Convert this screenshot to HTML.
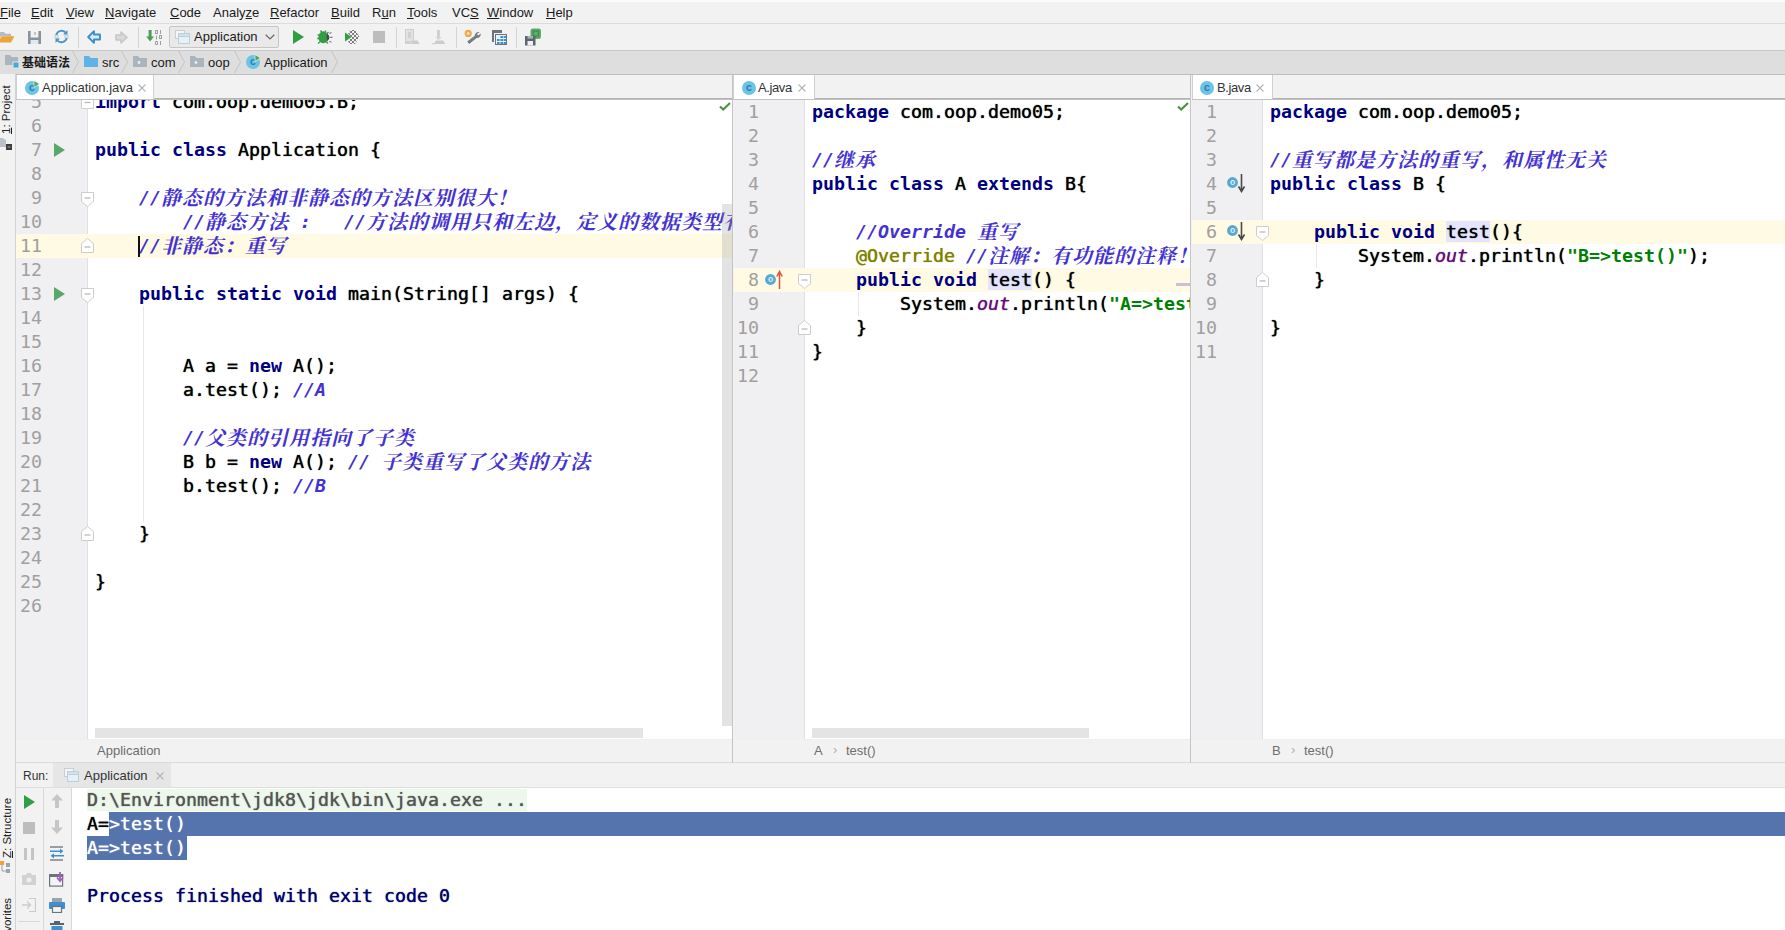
<!DOCTYPE html>
<html lang="zh"><head><meta charset="utf-8"><title>IntelliJ IDEA</title>
<style>
html,body{margin:0;padding:0}
html{width:1785px;height:930px;overflow:hidden}
body{width:1785px;height:930px;overflow:hidden;position:relative;background:#fff;font-family:"Liberation Sans","Noto Sans CJK SC",sans-serif;font-size:13px;color:#1a1a1a}
.a{position:absolute}
.m{font-family:"DejaVu Sans Mono","Liberation Mono","Noto Sans CJK SC",monospace;font-size:18.27px;line-height:24px;white-space:pre;letter-spacing:0;text-shadow:0 0 1px}
.code{color:#000}
.ln{color:#a0a0a0;text-align:right}
.k{color:#000080;font-weight:bold}
.s{color:#008000;font-weight:bold}
.c{color:#4432d0;font-style:italic;font-weight:bold}
.z{font-family:"Liberation Serif","Noto Serif CJK SC","Noto Sans CJK SC",serif;font-size:20px;letter-spacing:1px;font-weight:700;line-height:20px;position:relative;top:1px}
.an{color:#808000}
.f{color:#660e7a;font-style:italic}
.k,.s,.c,.ln{text-shadow:none}
.hl{background:#e4e4ff}
.ui{white-space:pre;line-height:16px}
u{text-decoration:underline;text-underline-offset:1px}
.vt{transform-origin:0 0;transform:rotate(-90deg);white-space:pre;font-size:11.5px;line-height:13px;color:#222}
</style></head><body>
<div class="a" style="left:0;top:0;width:1785px;height:24px;background:#f2f2f2"></div><div class="a" style="left:0;top:0;width:1785px;height:2px;background:#fbfbfb"></div><div class="a ui" style="left:0px;top:5px"><u>F</u>ile</div><div class="a ui" style="left:31px;top:5px"><u>E</u>dit</div><div class="a ui" style="left:66px;top:5px"><u>V</u>iew</div><div class="a ui" style="left:105px;top:5px"><u>N</u>avigate</div><div class="a ui" style="left:170px;top:5px"><u>C</u>ode</div><div class="a ui" style="left:213px;top:5px">Analy<u>z</u>e</div><div class="a ui" style="left:270px;top:5px"><u>R</u>efactor</div><div class="a ui" style="left:331px;top:5px"><u>B</u>uild</div><div class="a ui" style="left:372px;top:5px">R<u>u</u>n</div><div class="a ui" style="left:407px;top:5px"><u>T</u>ools</div><div class="a ui" style="left:452px;top:5px">VC<u>S</u></div><div class="a ui" style="left:487px;top:5px"><u>W</u>indow</div><div class="a ui" style="left:546px;top:5px"><u>H</u>elp</div><div class="a" style="left:0;top:23px;width:1785px;height:1px;background:#dcdcdc"></div><div class="a" style="left:0;top:24px;width:1785px;height:26px;background:#f2f2f2"></div><div class="a" style="left:0;top:50px;width:1785px;height:1px;background:#c9c9c9"></div><div class="a" style="left:0;top:51px;width:1785px;height:23px;background:#dedede"></div><div class="a" style="left:0;top:74px;width:1785px;height:1px;background:#bebebe"></div><div class="a" style="left:0;top:75px;width:1785px;height:23px;background:#f2f2f2"></div><div class="a" style="left:0;top:98px;width:1785px;height:1px;background:#b2b2b2"></div><div class="a" style="left:0;top:99px;width:1785px;height:1px;background:#c2c2c2"></div><div class="a" style="left:0;top:74px;width:16px;height:856px;background:#f2f2f2;border-right:1px solid #d2d2d2;box-sizing:border-box"></div><svg class="a" style="left:-2px;top:31px" width="17" height="12" viewBox="0 0 17 12" ><path d="M0 1h6l1.5 1.8H13V5H3L0 11z" fill="#b3bcc4"/><path d="M3.5 5.2H16.5L13 11.6H0z" fill="#eaa43a"/></svg><svg class="a" style="left:28px;top:31px" width="13" height="13" viewBox="0 0 13 13" ><path d="M0 0h13v13H0z" fill="#8a939b"/><path d="M2.6 0h7.8v6.5H2.6z" fill="#f2f2f2"/><path d="M2.6 9h7.8v4H2.6z" fill="#dfe9f2"/><path d="M6 1h2v3H6z" fill="#8a939b" opacity=".5"/></svg><svg class="a" style="left:54px;top:29px" width="15" height="15" viewBox="0 0 15 15" ><path d="M2.2 6.2A5.5 5.5 0 0 1 12 4" fill="none" stroke="#4a94c8" stroke-width="1.8"/><path d="M12.8 8.8A5.5 5.5 0 0 1 3 11" fill="none" stroke="#4a94c8" stroke-width="1.8"/><path d="M13.5 1v4.5H9z" fill="#4a94c8"/><path d="M1.5 14V9.5H6z" fill="#4a94c8"/><rect x="1" y="6" width="3" height="3" fill="#e8f0f8" stroke="#8aa" stroke-width=".5"/><rect x="11" y="6" width="3" height="3" fill="#e8f0f8" stroke="#8aa" stroke-width=".5"/></svg><div class="a" style="left:78px;top:27px;width:1px;height:21px;background:#d4d4d4"></div><svg class="a" style="left:87px;top:30px" width="14" height="14" viewBox="0 0 14 14" ><path d="M7 1.2L1.2 7 7 12.8V9.5h6v-5H7z" fill="#d6ecfa" stroke="#3a8fc9" stroke-width="1.9" stroke-linejoin="round"/></svg><svg class="a" style="left:115px;top:31px" width="13" height="13" viewBox="0 0 13 13" ><path d="M6 1L12 6.5 6 12V9H1V4h5z" fill="#d9d9d9" stroke="#c6c6c6" stroke-width="1.5" stroke-linejoin="round"/></svg><div class="a" style="left:138px;top:27px;width:1px;height:21px;background:#d4d4d4"></div><svg class="a" style="left:146px;top:29px" width="17" height="16" viewBox="0 0 17 16" ><path d="M2.6 1h3v6.5H8L4.1 12.5 0.2 7.5h2.4z" fill="#4b9e55"/><g fill="none" stroke="#9aa0a5" stroke-width="1"><rect x="9.5" y="1.5" width="2" height="3"/><path d="M14.5 1v4M10.5 6.5v4M9.5 12.5h2v3h-2zM14.5 12v4"/><rect x="13.5" y="6.5" width="2" height="3"/></g></svg><div class="a" style="left:169px;top:26px;width:110px;height:22px;background:#e9e9e9;border:1px solid #c6c6c6;box-sizing:border-box;border-radius:2px"></div><svg class="a" style="left:175px;top:30px" width="15" height="14" viewBox="0 0 15 14" ><rect x=".5" y=".5" width="9" height="8" fill="#f4f6f8" stroke="#c9ced2"/><rect x="3.5" y="3.5" width="11" height="10" fill="#e6f0f6" stroke="#bcd0dc"/><rect x="3.5" y="3.5" width="11" height="3" fill="#cfe2ee" stroke="#bcd0dc"/></svg><div class="a ui" style="left:194px;top:29px">Application</div><svg class="a" style="left:265px;top:34px" width="10" height="6" viewBox="0 0 10 6" ><path d="M0.7 0.7l4.3 4.2L9.3 0.7" fill="none" stroke="#6a6a6a" stroke-width="1.3"/></svg><svg class="a" style="left:293px;top:30px" width="11" height="14" viewBox="0 0 11 14" ><path d="M0 0L11 7.0 L0 14z" fill="#2f9e44"/></svg><svg class="a" style="left:317px;top:29px" width="16" height="16" viewBox="0 0 16 16" ><path d="M3.5 1.5L5.5 4M9 1.5L7.5 4M0.5 5.5l2.5 1.5M0.2 9.5h2.6M1 14.5l2.4-2M11.5 3L9.5 5M11 14.5l-2-2.2" stroke="#3c9a50" stroke-width="1.3" fill="none"/><ellipse cx="6.3" cy="8.3" rx="4.9" ry="6" fill="#2f9e44"/><path d="M10.2 4.6q4.6 3.9 0 7.6q-1.7-3.8 0-7.6z" fill="#4a4a4a"/><path d="M12.5 4.5l2-1M13.2 8.4h2.3M12.5 12.2l2 1.2" stroke="#777" stroke-width="1.1"/></svg><svg class="a" style="left:344px;top:29px" width="16" height="16" viewBox="0 0 16 16" ><defs><pattern id="ck" width="4" height="4" patternUnits="userSpaceOnUse"><rect width="2" height="2" fill="#7c7c7c"/><rect x="2" y="2" width="2" height="2" fill="#7c7c7c"/></pattern></defs><path d="M6 1h5l4.5 7-4.5 7H6l-2-3 3-4-3-4z" fill="url(#ck)"/><path d="M1 3.5L7.5 8 1 12.5z" fill="#2f9e44"/></svg><div class="a" style="left:373px;top:31px;width:12px;height:12px;background:#bdbdbd"></div><div class="a" style="left:396px;top:27px;width:1px;height:21px;background:#d4d4d4"></div><svg class="a" style="left:405px;top:29px" width="15" height="16" viewBox="0 0 15 16" ><rect x="0.5" y="0.5" width="8" height="12" fill="#e2e2e2" stroke="#cfcfcf"/><rect x="3" y="3" width="3" height="6" fill="#d0d0d0"/><path d="M6 15l1.5-3.5h5L14.5 15z" fill="#cccccc"/><rect x="0" y="13" width="6" height="2" fill="#d0d0d0"/></svg><svg class="a" style="left:432px;top:29px" width="15" height="16" viewBox="0 0 15 16" ><rect x="5" y="1" width="3" height="8" fill="#d0d0d0"/><path d="M3 8h7l-3.5 3z" fill="#d4d4d4"/><path d="M2 15l2-3.5h7L13.5 15z" fill="#cccccc"/><rect x="0" y="14" width="3" height="1.2" fill="#d0d0d0"/></svg><div class="a" style="left:456px;top:27px;width:1px;height:21px;background:#d4d4d4"></div><svg class="a" style="left:464px;top:29px" width="17" height="16" viewBox="0 0 17 16" ><path d="M15.6 3.2a3.6 3.6 0 0 0-4.8 3.6L3.2 12.6l2 2.4 7.4-6a3.6 3.6 0 0 0 4-4.4l-2.2 1.8-1.6-1.4z" fill="#757c82"/><circle cx="4.2" cy="4.4" r="3.6" fill="#efa94a"/><circle cx="4.2" cy="4.4" r="1.4" fill="#fbe3b8"/></svg><svg class="a" style="left:491px;top:29px" width="16" height="16" viewBox="0 0 16 16" ><path d="M1 1h10v3H3v9H1z" fill="#6d757c"/><rect x="4.5" y="5.5" width="11" height="10" fill="#e8f2fa" stroke="#6d757c"/><g fill="#3d8fd1"><rect x="6" y="10" width="2.6" height="2"/><rect x="9.4" y="7" width="2.6" height="2"/><rect x="9.4" y="10" width="2.6" height="2"/><rect x="12.6" y="7" width="2.4" height="2"/><rect x="12.6" y="10" width="2.4" height="2"/><rect x="9.4" y="13" width="2.6" height="2"/><rect x="12.6" y="13" width="2.4" height="2"/><rect x="6" y="13" width="2.6" height="2"/></g></svg><div class="a" style="left:516px;top:27px;width:1px;height:21px;background:#d4d4d4"></div><svg class="a" style="left:524px;top:28px" width="18" height="18" viewBox="0 0 18 18" ><rect x="6.5" y="0.5" width="10.5" height="10.5" rx="2.2" fill="#5fab6a"/><rect x="9" y="3" width="5.5" height="5" fill="none" stroke="#3f8a4c" stroke-width="1.2"/><path d="M1 8h10.5v9.5H1z" fill="#5d666e"/><path d="M3.5 13h5.5v4.5H3.5z" fill="#eef2f5"/><path d="M3.5 8h5.5v2.6H3.5z" fill="#a9b2b9"/></svg><svg class="a" style="left:5px;top:54px" width="15" height="15" viewBox="0 0 15 15" ><path d="M0 1h5l1.5 2H13v8H0z" fill="#aab4be"/><rect x="8" y="8" width="6" height="6" fill="#3fa9e0" stroke="#e3e3e3" stroke-width="1"/></svg><div class="a ui" style="left:22px;top:55px;font-weight:bold;font-size:12px;letter-spacing:0">基础语法</div><svg class="a" style="left:72px;top:51px" width="8" height="22" viewBox="0 0 8 22" ><path d="M0.5 0L6.5 11 0.5 22" fill="none" stroke="#c4c4c4" stroke-width="1"/></svg><svg class="a" style="left:84px;top:55px" width="14" height="12" viewBox="0 0 14 12" ><path d="M0 1h5l1.5 2H14v9H0z" fill="#5fb3e6"/></svg><div class="a ui" style="left:102px;top:55px">src</div><svg class="a" style="left:121px;top:51px" width="8" height="22" viewBox="0 0 8 22" ><path d="M0.5 0L6.5 11 0.5 22" fill="none" stroke="#c4c4c4" stroke-width="1"/></svg><svg class="a" style="left:133px;top:55px" width="14" height="12" viewBox="0 0 14 12" ><path d="M0 1h5l1.5 2H14v9H0z" fill="#aab4be"/><circle cx="6" cy="7.5" r="1.4" fill="#e9eef2"/></svg><div class="a ui" style="left:151px;top:55px">com</div><svg class="a" style="left:178px;top:51px" width="8" height="22" viewBox="0 0 8 22" ><path d="M0.5 0L6.5 11 0.5 22" fill="none" stroke="#c4c4c4" stroke-width="1"/></svg><svg class="a" style="left:190px;top:55px" width="14" height="12" viewBox="0 0 14 12" ><path d="M0 1h5l1.5 2H14v9H0z" fill="#aab4be"/><circle cx="6" cy="7.5" r="1.4" fill="#e9eef2"/></svg><div class="a ui" style="left:208px;top:55px">oop</div><svg class="a" style="left:234px;top:51px" width="8" height="22" viewBox="0 0 8 22" ><path d="M0.5 0L6.5 11 0.5 22" fill="none" stroke="#c4c4c4" stroke-width="1"/></svg><svg class="a" style="left:246px;top:55px" width="15" height="14" viewBox="0 0 15 14" overflow="visible"><circle cx="7" cy="7" r="7" fill="#6cc3e6"/><text x="7" y="10.4" font-family="Liberation Sans,sans-serif" font-size="10.5" font-weight="bold" text-anchor="middle" fill="#2a7fab">c</text><path d="M9 -0.5L14.5 3 9 6.5z" fill="#4fa75c" stroke="#fff" stroke-width="0.6"/></svg><div class="a ui" style="left:264px;top:55px">Application</div><svg class="a" style="left:331px;top:51px" width="8" height="22" viewBox="0 0 8 22" ><path d="M0.5 0L6.5 11 0.5 22" fill="none" stroke="#c4c4c4" stroke-width="1"/></svg><div class="a" style="left:16px;top:75px;width:138px;height:24px;background:#fff;border-left:1px solid #d0d0d0;border-right:1px solid #d0d0d0;box-sizing:border-box"></div><svg class="a" style="left:25px;top:81px" width="15" height="14" viewBox="0 0 15 14" overflow="visible"><circle cx="7" cy="7" r="7" fill="#6cc3e6"/><text x="7" y="10.4" font-family="Liberation Sans,sans-serif" font-size="10.5" font-weight="bold" text-anchor="middle" fill="#2a7fab">c</text><path d="M9 -0.5L14.5 3 9 6.5z" fill="#4fa75c" stroke="#fff" stroke-width="0.6"/></svg><div class="a ui" style="left:42px;top:80px;font-size:13px;color:#333;letter-spacing:0px">Application.java</div><svg class="a" style="left:138px;top:84px" width="8" height="8" viewBox="0 0 8 8" ><path d="M0.5 0.5l7 7M7.5 0.5l-7 7" stroke="#b4b4b4" stroke-width="1.1"/></svg><div class="a" style="left:733px;top:75px;width:82px;height:24px;background:#fff;border-left:1px solid #d0d0d0;border-right:1px solid #d0d0d0;box-sizing:border-box"></div><svg class="a" style="left:742px;top:81px" width="15" height="14" viewBox="0 0 15 14" overflow="visible"><circle cx="7" cy="7" r="7" fill="#6cc3e6"/><text x="7" y="10.4" font-family="Liberation Sans,sans-serif" font-size="10.5" font-weight="bold" text-anchor="middle" fill="#2a7fab">c</text></svg><div class="a ui" style="left:758px;top:80px;font-size:13px;color:#333;letter-spacing:-0.4px">A.java</div><svg class="a" style="left:798px;top:84px" width="8" height="8" viewBox="0 0 8 8" ><path d="M0.5 0.5l7 7M7.5 0.5l-7 7" stroke="#b4b4b4" stroke-width="1.1"/></svg><div class="a" style="left:1192px;top:75px;width:81px;height:24px;background:#fff;border-left:1px solid #d0d0d0;border-right:1px solid #d0d0d0;box-sizing:border-box"></div><svg class="a" style="left:1200px;top:81px" width="15" height="14" viewBox="0 0 15 14" overflow="visible"><circle cx="7" cy="7" r="7" fill="#6cc3e6"/><text x="7" y="10.4" font-family="Liberation Sans,sans-serif" font-size="10.5" font-weight="bold" text-anchor="middle" fill="#2a7fab">c</text></svg><div class="a ui" style="left:1217px;top:80px;font-size:13px;color:#333;letter-spacing:-0.4px">B.java</div><svg class="a" style="left:1256px;top:84px" width="8" height="8" viewBox="0 0 8 8" ><path d="M0.5 0.5l7 7M7.5 0.5l-7 7" stroke="#b4b4b4" stroke-width="1.1"/></svg><div class="a" style="left:16px;top:99px;width:1769px;height:1px;background:#c2c2c2"></div><div class="a" style="left:16px;top:100px;width:71px;height:640px;background:#f0eff1;border-right:1px solid #e0e0e0"></div><div class="a" style="left:16px;top:234px;width:716px;height:24px;background:#fffae3"></div><div class="a" style="left:2px;top:100px;width:40px;height:640px;overflow:hidden"><div class="a m ln" style="left:0;top:-10px;width:40px">5
6
7
8
9
10
11
12
13
14
15
16
17
18
19
20
21
22
23
24
25
26</div></div><div class="a" style="left:95px;top:100px;width:637px;height:640px;overflow:hidden"><div class="a m code" style="left:0;top:-10px"><b class="k">import</b> com.oop.demo05.B;

<b class="k">public class</b> Application {

    <span class="c">//<span class="z">静态的方法和非静态的方法区别很大！</span></span>
        <span class="c">//<span class="z">静态方法</span> :   //<span class="z">方法的调用只和左边，定义的数据类型有关</span></span>
    <span class="c">//<span class="z">非静态：重写</span></span>

    <b class="k">public static void</b> main(String[] args) {


        A a = <b class="k">new</b> A();
        a.test(); <span class="c">//A</span>

        <span class="c">//<span class="z">父类的引用指向了子类</span></span>
        B b = <b class="k">new</b> A(); <span class="c">// <span class="z">子类重写了父类的方法</span></span>
        b.test(); <span class="c">//B</span>

    }

}
</div></div><div class="a" style="left:734px;top:100px;width:70px;height:640px;background:#f0eff1;border-right:1px solid #e0e0e0"></div><div class="a" style="left:734px;top:268px;width:456px;height:24px;background:#fffae3"></div><div class="a" style="left:719px;top:100px;width:40px;height:640px;overflow:hidden"><div class="a m ln" style="left:0;top:0px;width:40px">1
2
3
4
5
6
7
8
9
10
11
12</div></div><div class="a" style="left:812px;top:100px;width:378px;height:640px;overflow:hidden"><div class="a m code" style="left:0;top:0px"><b class="k">package</b> com.oop.demo05;

<span class="c">//<span class="z">继承</span></span>
<b class="k">public class</b> A <b class="k">extends</b> B{

    <span class="c">//Override <span class="z">重写</span></span>
    <span class="an">@Override</span> <span class="c">//<span class="z">注解：有功能的注释！</span></span>
    <b class="k">public void</b> <span class="hl">test</span>() {
        System.<i class="f">out</i>.println(<b class="s">"A=&gt;test()"</b>);
    }
}
</div></div><div class="a" style="left:1192px;top:100px;width:70px;height:640px;background:#f0eff1;border-right:1px solid #e0e0e0"></div><div class="a" style="left:1192px;top:220px;width:593px;height:24px;background:#fffae3"></div><div class="a" style="left:1177px;top:100px;width:40px;height:640px;overflow:hidden"><div class="a m ln" style="left:0;top:0px;width:40px">1
2
3
4
5
6
7
8
9
10
11</div></div><div class="a" style="left:1270px;top:100px;width:515px;height:640px;overflow:hidden"><div class="a m code" style="left:0;top:0px"><b class="k">package</b> com.oop.demo05;

<span class="c">//<span class="z">重写都是方法的重写，和属性无关</span></span>
<b class="k">public class</b> B {

    <b class="k">public void</b> <span class="hl">test</span>(){
        System.<i class="f">out</i>.println(<b class="s">"B=&gt;test()"</b>);
    }

}
</div></div><div class="a" style="left:732px;top:75px;width:1px;height:688px;background:#c4c4c4"></div><div class="a" style="left:1190px;top:75px;width:1px;height:688px;background:#c4c4c4"></div><div class="a" style="left:1191px;top:75px;width:1px;height:688px;background:#f2f2f2"></div><div class="a" style="left:733px;top:100px;width:1px;height:664px;background:#f2f2f2"></div><div class="a" style="left:138px;top:236px;width:2px;height:21px;background:#111"></div><svg class="a" style="left:54px;top:143px" width="11" height="14" viewBox="0 0 11 14" ><path d="M0 0L11 7.0 L0 14z" fill="#59a869"/></svg><svg class="a" style="left:54px;top:287px" width="11" height="14" viewBox="0 0 11 14" ><path d="M0 0L11 7.0 L0 14z" fill="#59a869"/></svg><div class="a" style="left:80px;top:100px;width:16px;height:10px;overflow:hidden"><svg class="a" style="left:1px;top:-4px" width="13" height="14"><path d="M0.5 0.5h12v12h-12z" fill="#fff" stroke="#d0d0d0"/><path d="M3.5 6.5h6" stroke="#b4b4b4" stroke-width="1.2"/></svg></div><svg class="a" style="left:80px;top:191px" width="15" height="17" viewBox="0 0 15 17" ><path d="M1.5 1.5h12v9l-6 5-6-5z" fill="#fff" stroke="#cdcdcd"/><path d="M4.5 7h6" stroke="#b4b4b4" stroke-width="1.2"/></svg><svg class="a" style="left:80px;top:237px" width="15" height="17" viewBox="0 0 15 17" ><path d="M1.5 15.5h12v-9l-6-5-6 5z" fill="#fff" stroke="#cdcdcd"/><path d="M4.5 10h6" stroke="#b4b4b4" stroke-width="1.2"/></svg><svg class="a" style="left:80px;top:287px" width="15" height="17" viewBox="0 0 15 17" ><path d="M1.5 1.5h12v9l-6 5-6-5z" fill="#fff" stroke="#cdcdcd"/><path d="M4.5 7h6" stroke="#b4b4b4" stroke-width="1.2"/></svg><svg class="a" style="left:80px;top:525px" width="15" height="17" viewBox="0 0 15 17" ><path d="M1.5 15.5h12v-9l-6-5-6 5z" fill="#fff" stroke="#cdcdcd"/><path d="M4.5 10h6" stroke="#b4b4b4" stroke-width="1.2"/></svg><div class="a" style="left:143px;top:306px;width:1px;height:216px;background:#e8e8e8"></div><svg class="a" style="left:765px;top:270px" width="19" height="20" viewBox="0 0 19 20" ><circle cx="5.5" cy="9.5" r="5.4" fill="#5aa7cf"/><text x="5.5" y="12.4" font-family="Liberation Sans,sans-serif" font-size="8.5" font-weight="bold" text-anchor="middle" fill="#d9edf7">o</text><path d="M14.5 19V3M11.8 6.5L14.5 1.5 17.2 6.5" stroke="#e0553d" stroke-width="1.5" fill="none"/></svg><svg class="a" style="left:797px;top:273px" width="15" height="17" viewBox="0 0 15 17" ><path d="M1.5 1.5h12v9l-6 5-6-5z" fill="#fff" stroke="#cdcdcd"/><path d="M4.5 7h6" stroke="#b4b4b4" stroke-width="1.2"/></svg><svg class="a" style="left:797px;top:319px" width="15" height="17" viewBox="0 0 15 17" ><path d="M1.5 15.5h12v-9l-6-5-6 5z" fill="#fff" stroke="#cdcdcd"/><path d="M4.5 10h6" stroke="#b4b4b4" stroke-width="1.2"/></svg><div class="a" style="left:858px;top:292px;width:1px;height:24px;background:#e8e8e8"></div><svg class="a" style="left:1227px;top:173px" width="19" height="20" viewBox="0 0 19 20" ><circle cx="5.5" cy="9.5" r="5.4" fill="#5aa7cf"/><text x="5.5" y="12.4" font-family="Liberation Sans,sans-serif" font-size="8.5" font-weight="bold" text-anchor="middle" fill="#d9edf7">o</text><path d="M14.5 1v16M11.5 13.5L14.5 18.5 17.5 13.5" stroke="#4a4a4a" stroke-width="1.6" fill="none"/></svg><svg class="a" style="left:1227px;top:221px" width="19" height="20" viewBox="0 0 19 20" ><circle cx="5.5" cy="9.5" r="5.4" fill="#5aa7cf"/><text x="5.5" y="12.4" font-family="Liberation Sans,sans-serif" font-size="8.5" font-weight="bold" text-anchor="middle" fill="#d9edf7">o</text><path d="M14.5 1v16M11.5 13.5L14.5 18.5 17.5 13.5" stroke="#4a4a4a" stroke-width="1.6" fill="none"/></svg><svg class="a" style="left:1255px;top:225px" width="15" height="17" viewBox="0 0 15 17" ><path d="M1.5 1.5h12v9l-6 5-6-5z" fill="#fff" stroke="#cdcdcd"/><path d="M4.5 7h6" stroke="#b4b4b4" stroke-width="1.2"/></svg><svg class="a" style="left:1255px;top:271px" width="15" height="17" viewBox="0 0 15 17" ><path d="M1.5 15.5h12v-9l-6-5-6 5z" fill="#fff" stroke="#cdcdcd"/><path d="M4.5 10h6" stroke="#b4b4b4" stroke-width="1.2"/></svg><div class="a" style="left:1316px;top:244px;width:1px;height:24px;background:#e8e8e8"></div><svg class="a" style="left:719px;top:102px" width="12" height="9" viewBox="0 0 12 9" ><path d="M1 4.5l3.2 3L11 1" fill="none" stroke="#4f9045" stroke-width="2.2"/></svg><svg class="a" style="left:1177px;top:102px" width="12" height="9" viewBox="0 0 12 9" ><path d="M1 4.5l3.2 3L11 1" fill="none" stroke="#4f9045" stroke-width="2.2"/></svg><div class="a" style="left:1176px;top:283px;width:14px;height:3px;background:#cbc0da"></div><div class="a" style="left:722px;top:204px;width:10px;height:522px;background:rgba(150,150,150,.27)"></div><div class="a" style="left:95px;top:728px;width:548px;height:10px;background:#e4e4e4"></div><div class="a" style="left:812px;top:728px;width:277px;height:10px;background:#e4e4e4"></div><div class="a" style="left:16px;top:739px;width:1769px;height:24px;background:#f2f2f2;border-top:1px solid #efefef;border-bottom:1px solid #dadada;box-sizing:border-box"></div><div class="a" style="left:732px;top:739px;width:1px;height:24px;background:#c4c4c4"></div><div class="a" style="left:1190px;top:739px;width:1px;height:24px;background:#c4c4c4"></div><div class="a ui" style="left:97px;top:743px;font-size:13px;color:#6e6e6e">Application</div><div class="a ui" style="left:814px;top:743px;font-size:13px;color:#6e6e6e">A</div><div class="a ui" style="left:833px;top:742px;font-size:13px;color:#b0b0b0">›</div><div class="a ui" style="left:846px;top:743px;font-size:13px;color:#6e6e6e">test()</div><div class="a ui" style="left:1272px;top:743px;font-size:13px;color:#6e6e6e">B</div><div class="a ui" style="left:1291px;top:742px;font-size:13px;color:#b0b0b0">›</div><div class="a ui" style="left:1304px;top:743px;font-size:13px;color:#6e6e6e">test()</div><div class="a" style="left:16px;top:763px;width:1769px;height:25px;background:#f2f2f2;border-bottom:1px solid #dedede;box-sizing:border-box"></div><div class="a ui" style="left:23px;top:768px;font-size:12px;color:#333">Run:</div><div class="a" style="left:53px;top:763px;width:118px;height:24px;background:#e6e6e6"></div><svg class="a" style="left:64px;top:768px" width="15" height="14" viewBox="0 0 15 14" ><rect x=".5" y=".5" width="9" height="8" fill="#f4f6f8" stroke="#c9ced2"/><rect x="3.5" y="3.5" width="11" height="10" fill="#e6f0f6" stroke="#bcd0dc"/><rect x="3.5" y="3.5" width="11" height="3" fill="#cfe2ee" stroke="#bcd0dc"/></svg><div class="a ui" style="left:84px;top:768px;font-size:13px;color:#333">Application</div><svg class="a" style="left:156px;top:772px" width="8" height="8" viewBox="0 0 8 8" ><path d="M0.5 0.5l7 7M7.5 0.5l-7 7" stroke="#b4b4b4" stroke-width="1.1"/></svg><div class="a" style="left:16px;top:788px;width:56px;height:142px;background:#f2f2f2"></div><div class="a" style="left:43px;top:788px;width:1px;height:142px;background:#d8d8d8"></div><div class="a" style="left:71px;top:788px;width:1px;height:142px;background:#d8d8d8"></div><svg class="a" style="left:24px;top:795px" width="11" height="14" viewBox="0 0 11 14" ><path d="M0 0L11 7.0 L0 14z" fill="#2f9e44"/></svg><div class="a" style="left:23px;top:822px;width:12px;height:12px;background:#bdbdbd"></div><div class="a" style="left:24px;top:848px;width:3px;height:12px;background:#c4c4c4"></div><div class="a" style="left:31px;top:848px;width:3px;height:12px;background:#c4c4c4"></div><svg class="a" style="left:22px;top:873px" width="14" height="13" viewBox="0 0 14 13" ><path d="M0 2h4l1-2h4l1 2h4v10H0z" fill="#d2d2d2"/><circle cx="7" cy="7" r="2.5" fill="#eee"/></svg><svg class="a" style="left:22px;top:898px" width="14" height="14" viewBox="0 0 14 14" ><path d="M7 .5h6.5v13H7" fill="none" stroke="#cbcbcb" stroke-width="1.2"/><path d="M0 7h8M5 3.5L8.5 7 5 10.5" fill="none" stroke="#cbcbcb" stroke-width="1.4"/></svg><div class="a" style="left:18px;top:921px;width:22px;height:1px;background:#d8d8d8"></div><svg class="a" style="left:51px;top:794px" width="12" height="14" viewBox="0 0 12 14" ><path d="M6 0L0 6.5h4V14h4V6.5h4z" fill="#c6c6c6"/></svg><svg class="a" style="left:51px;top:820px" width="12" height="14" viewBox="0 0 12 14" ><path d="M6 14L0 7.5h4V0h4v7.5h4z" fill="#c6c6c6"/></svg><svg class="a" style="left:49px;top:846px" width="16" height="15" viewBox="0 0 16 15" ><path d="M1 1h13M1 14h13" stroke="#7a838a" stroke-width="1.3"/><path d="M1 5.2h11M4 9.8h11" stroke="#3d8fd1" stroke-width="1.5"/><path d="M11 2.6l3.4 2.6L11 7.8z" fill="#3d8fd1"/><path d="M5 7.2L1.6 9.8 5 12.4z" fill="#3d8fd1"/></svg><svg class="a" style="left:49px;top:872px" width="16" height="15" viewBox="0 0 16 15" ><rect x=".6" y="2.6" width="13" height="11.5" fill="#f4f4f4" stroke="#6d757c" stroke-width="1.2"/><rect x="0" y="2" width="14.2" height="3" fill="#6d757c"/><path d="M11 0v8M8 5.5l3 3.5 3-3.5" fill="none" stroke="#a55fc4" stroke-width="1.8"/></svg><svg class="a" style="left:49px;top:898px" width="16" height="15" viewBox="0 0 16 15" ><rect x="3" y="0" width="10" height="4" fill="#9aa4ab"/><rect x="0" y="4" width="16" height="7" rx="1" fill="#3d8fd1"/><rect x="3.5" y="8.5" width="9" height="6" fill="#f4f4f4" stroke="#6d757c" stroke-width="1.2"/></svg><svg class="a" style="left:50px;top:921px" width="14" height="9" viewBox="0 0 14 9" ><path d="M4 0h6v2h4v2H0V2h4z" fill="#59636b"/><rect x="1.5" y="5" width="11" height="4" fill="#3d8fd1"/></svg><div class="a" style="left:87px;top:789px;width:440px;height:22px;background:#eef7ec"></div><div class="a" style="left:109px;top:812px;width:1676px;height:24px;background:#5574ad"></div><div class="a" style="left:87px;top:836px;width:100px;height:24px;background:#5574ad"></div><div class="a m" style="left:87px;top:788px;color:#000"><span style="color:#555">D:\Environment\jdk8\jdk\bin\java.exe ...</span>
A=<span style="color:#fff">&gt;test()</span>
<span style="color:#fff">A=&gt;test()</span>

<span style="color:#00006e">Process finished with exit code 0</span></div><div class="a" style="left:0;top:74px;width:16px;height:856px;overflow:hidden"><div class="a vt" style="left:0px;top:60px"><u>1</u>: Project</div><svg class="a" style="left:0px;top:64px" width="13" height="13" viewBox="0 0 13 13" ><path d="M0 0h3l1 1.5h2V9H0z" fill="#b9c2ca"/><rect x="6" y="6" width="6" height="6" fill="#3c3c3c"/><rect x="7.5" y="8.5" width="3" height="1" fill="#aaa"/></svg><div class="a vt" style="left:1px;top:784px"><u>Z</u>: Structure</div><svg class="a" style="left:0px;top:787px" width="11" height="12" viewBox="0 0 11 12" ><rect x="0" y="0" width="4" height="4" fill="#f0a33a"/><rect x="6" y="2" width="4" height="4" fill="#9aa4ab"/><rect x="6" y="8" width="4" height="4" fill="#9aa4ab"/><path d="M2 4v6h4" fill="none" stroke="#9aa4ab"/></svg><div class="a vt" style="left:1px;top:884px">2: Favorites</div></div></body></html>
